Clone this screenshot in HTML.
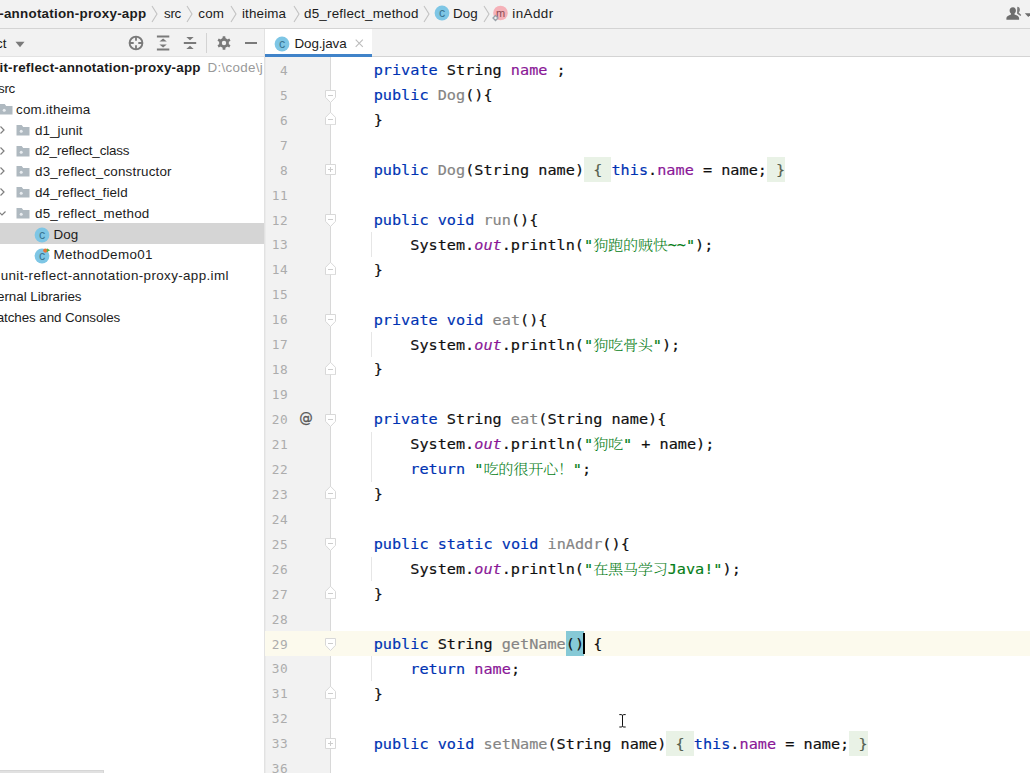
<!DOCTYPE html>
<html lang="zh"><head><meta charset="utf-8"><title>Dog.java</title>
<style>
*{box-sizing:border-box;margin:0;padding:0}
html,body{width:1030px;height:773px;overflow:hidden;background:#fff}
body{position:relative;font-family:"Liberation Sans","Noto Sans CJK SC",sans-serif;font-size:13px;color:#000}
#nav{position:absolute;left:0;top:0;width:1030px;height:29px;background:#f2f2f2;border-bottom:1px solid #d4d4d4;overflow:hidden}
.t{position:absolute;top:0;line-height:27px;white-space:nowrap;font-size:13.4px;color:#1c1c1c}
.b{font-weight:bold}
#nav svg,#head svg{position:absolute}
#side{position:absolute;left:0;top:29px;width:265px;height:744px;background:#fff;border-right:1px solid #e2e2e2;overflow:hidden}
#head{position:absolute;left:0;top:0;width:264px;height:28px;background:#f2f2f2;border-bottom:1px solid #e3e3e3;overflow:hidden}
#head .t{line-height:30px}
#tree{position:absolute;left:0;top:0;width:264px;height:773px;overflow:hidden}
.row{position:absolute;left:0;width:264px;height:21px;white-space:nowrap}
.row.sel{background:#d5d5d5}
.tx{position:absolute;top:0.200px;line-height:21px;font-size:13.4px;color:#1c1c1c;white-space:nowrap}
.tx.gray{color:#999}
.row .ic{position:absolute;top:2.500px}
#hscroll{position:absolute;left:0;top:770px;width:104px;height:3px;background:#e1e1e1;border-top:1px solid #d6d6d6;border-right:1px solid #d6d6d6}
#tabs{position:absolute;left:265px;top:29px;width:765px;height:28px;background:#f2f2f2;border-bottom:1px solid #d4d4d4}
#tab{position:absolute;left:0;top:0;width:107px;height:28px;background:#fff;border-bottom:3px solid #4083c9}
#tab .t{line-height:29px}
#tab svg{position:absolute}
#editor{position:absolute;left:265px;top:57px;width:765px;height:716px;background:#fff;overflow:hidden}
#gutter{position:absolute;left:0;top:0;width:66px;height:716px;background:#f2f2f2;border-right:1px solid #d8d8d8;border-left:1px solid #ebebeb}
.ln{position:absolute;left:265px;width:765px;height:24.94px}
.currow{position:absolute;left:265px;width:765px;height:24.94px;background:#fcfaed}
.num{position:absolute;right:741.5px;top:1.600px;line-height:24.94px;font-family:"DejaVu Sans Mono","Liberation Mono",monospace;font-size:12.800px;letter-spacing:0.700px;color:#acacac}
.code{position:absolute;left:72.12px;top:0.9px;line-height:24.94px;font-family:"DejaVu Sans Mono","Liberation Mono","Noto Serif CJK SC",monospace;font-size:15.19px;color:#101010;white-space:pre;-webkit-text-stroke-width:0.180px;transform:scaleY(0.935);transform-origin:0 50%}
.cj{letter-spacing:-0.290px;font-weight:300;-webkit-text-stroke-width:0}
.k{color:#0033b3}.g{color:#858585}.f{color:#8a1797}.s{color:#067d17}.i{font-style:italic}
.fd{position:absolute;background:#e9f2e6;height:24.94px}
.br{position:absolute;background:#86c9d6;height:24.94px}
.fdt{color:#55604f}
.caret{position:absolute;width:2px;height:21px;background:#000}
.fold{position:absolute}
.at{position:absolute;left:299.300px;line-height:24.94px;font-size:13.500px;color:#585858;font-family:"DejaVu Sans","Liberation Sans",sans-serif;-webkit-text-stroke:0.300px #585858}
.guide{position:absolute;left:371px;width:1px;background:#e6e6e6}
</style></head><body>
<div id="nav">
<span class="t b" style="right:883.6px;letter-spacing:0.243px;">-annotation-proxy-app</span>
<svg style="left:150.5px;top:5px" width="7" height="18" viewBox="0 0 7 18"><path d="M1 1L6 9L1 17" fill="none" stroke="#c2c2c2" stroke-width="1.100"/></svg>
<span class="t" style="left:164.0px;letter-spacing:-0.286px;">src</span>
<svg style="left:185.5px;top:5px" width="7" height="18" viewBox="0 0 7 18"><path d="M1 1L6 9L1 17" fill="none" stroke="#c2c2c2" stroke-width="1.100"/></svg>
<span class="t" style="left:198.3px;letter-spacing:0.163px;">com</span>
<svg style="left:230.0px;top:5px" width="7" height="18" viewBox="0 0 7 18"><path d="M1 1L6 9L1 17" fill="none" stroke="#c2c2c2" stroke-width="1.100"/></svg>
<span class="t" style="left:242.0px;letter-spacing:0.147px;">itheima</span>
<svg style="left:292.5px;top:5px" width="7" height="18" viewBox="0 0 7 18"><path d="M1 1L6 9L1 17" fill="none" stroke="#c2c2c2" stroke-width="1.100"/></svg>
<span class="t" style="left:304.0px;letter-spacing:0.216px;">d5_reflect_method</span>
<svg style="left:423.0px;top:5px" width="7" height="18" viewBox="0 0 7 18"><path d="M1 1L6 9L1 17" fill="none" stroke="#c2c2c2" stroke-width="1.100"/></svg>
<svg class="nic" style="left:433.600px;top:5.300px" width="16" height="16" viewBox="0 0 16 16"><circle cx="8" cy="8" r="7.400" fill="#7ec6e5"/><text x="8" y="11.800" font-family="Liberation Sans, sans-serif" font-size="12.500" text-anchor="middle" fill="#3a7693">c</text></svg>
<span class="t" style="left:453.0px;letter-spacing:0.074px;">Dog</span>
<svg style="left:483.0px;top:5px" width="7" height="18" viewBox="0 0 7 18"><path d="M1 1L6 9L1 17" fill="none" stroke="#c2c2c2" stroke-width="1.100"/></svg>
<svg class="nic" style="left:491px;top:5.300px" width="17" height="17" viewBox="0 0 17 17"><circle cx="9.500" cy="8" r="7.300" fill="#f5b1b8"/><text x="9.500" y="11.900" font-family="Liberation Sans, sans-serif" font-size="11" text-anchor="middle" fill="#8a4b53">m</text><path d="M4.500 10.500L7 13L4.500 15.500L2 13Z" fill="#f2f2f2" stroke="#9aa1a8" stroke-width="1.300"/></svg>
<span class="t" style="left:512.3px;letter-spacing:0.430px;">inAddr</span>
<svg style="left:1005px;top:6px" width="25" height="16" viewBox="0 0 25 16"><path d="M12.3 0.8c1.6 0 2.6 1.3 2.6 2.9c0 1.2-.5 2.2-1.2 2.8l2.6 2.4l-.9 1l-3.4-2.5z" fill="#7b7b7b"/><path d="M8 1.3c1.8 0 2.9 1.4 2.9 3.1c0 1.3-.6 2.5-1.4 3.1v.9c2.500 .8 4.300 1.800 4.600 3.500v1.900h-12.700v-1.900c.3-1.700 2.100-2.700 4.600-3.500v-.9c-.8-.6-1.400-1.800-1.400-3.100c0-1.700 1.100-3.100 3.400-3.100z" fill="#6e6e6e"/><path d="M19.800 7.300h7l-3.500 3.600z" fill="#6e6e6e"/></svg>
</div>
<div id="side">
<div id="head">
<span class="t" style="right:257.5px;">ct</span>
<svg style="left:14.500px;top:11.800px" width="10" height="7" viewBox="0 0 10 7"><path d="M0.5 0.8H9.500L5 6.200Z" fill="#7a7a7a"/></svg>
<svg style="left:127.6px;top:5.800px" width="16" height="16" viewBox="0 0 16 16"><circle cx="8" cy="8" r="6.400" fill="none" stroke="#7a7a7a" stroke-width="1.900"/><path d="M8 1.500V5.700M8 10.300V14.500M1.500 8H5.700M10.300 8H14.500" stroke="#7a7a7a" stroke-width="1.800"/></svg>
<svg style="left:155px;top:5.800px" width="16" height="16" viewBox="0 0 16 16"><path d="M1.900 1.400H14.300M1.900 14.600H14.300" stroke="#7a7a7a" stroke-width="2"/><path d="M8.100 3.500L11.800 6.500H4.400ZM8.100 12.500L11.800 9.500H4.400Z" fill="#7a7a7a"/></svg>
<svg style="left:181.500px;top:5.800px" width="16" height="16" viewBox="0 0 16 16"><path d="M1.800 8H14.200" stroke="#7a7a7a" stroke-width="2"/><path d="M8 5.300L11.700 2.100H4.300ZM8 10.700L11.700 14H4.300Z" fill="#7a7a7a"/></svg>
<div style="position:absolute;left:206px;top:4px;width:1px;height:20px;background:#d3d3d3"></div>
<svg style="left:216px;top:6.100px" width="16" height="16" viewBox="0 0 16 16"><g fill="#7a7a7a"><circle cx="8" cy="8" r="4.900"/><rect x="6.600" y="1.200" width="2.800" height="13.600" rx="0.500"/><rect x="6.600" y="1.200" width="2.800" height="13.600" rx="0.500" transform="rotate(60 8 8)"/><rect x="6.600" y="1.200" width="2.800" height="13.600" rx="0.500" transform="rotate(120 8 8)"/></g><circle cx="8" cy="8" r="2.200" fill="#f2f2f2"/></svg>
<div style="position:absolute;left:245px;top:13px;width:12px;height:2px;background:#7a7a7a"></div>
</div>
</div>
<div id="tree">
<div class="row" style="top:56.90px"><span class="tx b" style="right:63.3px;letter-spacing:0.203px;">it-reflect-annotation-proxy-app</span><span class="tx gray" style="left:207.5px;letter-spacing:0.295px;">D:\code\j</span></div>
<div class="row" style="top:77.71px"><span class="tx" style="right:249.0px;letter-spacing:-0.286px;">src</span></div>
<div class="row" style="top:98.52px"><svg class="ic" style="left:-2.5px" width="16" height="16" viewBox="0 0 16 16"><path d="M1.5 3H6.7L8.2 5H14.5V13.5H1.5Z" fill="#afb9c0"/><circle cx="6.200" cy="9.200" r="1.500" fill="#e9edf0"/></svg><span class="tx" style="left:16.0px;letter-spacing:0.201px;">com.itheima</span></div>
<div class="row" style="top:119.33px"><svg class="ic" style="left:-6.5px" width="16" height="16" viewBox="0 0 16 16"><path d="M6.500 4.500L10 8L6.500 11.500" fill="none" stroke="#7f7f7f" stroke-width="1.200"/></svg><svg class="ic" style="left:14.5px" width="16" height="16" viewBox="0 0 16 16"><path d="M1.5 3H6.7L8.2 5H14.5V13.5H1.5Z" fill="#afb9c0"/><circle cx="6.200" cy="9.200" r="1.500" fill="#e9edf0"/></svg><span class="tx" style="left:35.0px;letter-spacing:0.085px;">d1_junit</span></div>
<div class="row" style="top:140.14px"><svg class="ic" style="left:-6.5px" width="16" height="16" viewBox="0 0 16 16"><path d="M6.500 4.500L10 8L6.500 11.500" fill="none" stroke="#7f7f7f" stroke-width="1.200"/></svg><svg class="ic" style="left:14.5px" width="16" height="16" viewBox="0 0 16 16"><path d="M1.5 3H6.7L8.2 5H14.5V13.5H1.5Z" fill="#afb9c0"/><circle cx="6.200" cy="9.200" r="1.500" fill="#e9edf0"/></svg><span class="tx" style="left:35.0px;letter-spacing:-0.148px;">d2_reflect_class</span></div>
<div class="row" style="top:160.95px"><svg class="ic" style="left:-6.5px" width="16" height="16" viewBox="0 0 16 16"><path d="M6.500 4.500L10 8L6.500 11.500" fill="none" stroke="#7f7f7f" stroke-width="1.200"/></svg><svg class="ic" style="left:14.5px" width="16" height="16" viewBox="0 0 16 16"><path d="M1.5 3H6.7L8.2 5H14.5V13.5H1.5Z" fill="#afb9c0"/><circle cx="6.200" cy="9.200" r="1.500" fill="#e9edf0"/></svg><span class="tx" style="left:35.0px;letter-spacing:0.195px;">d3_reflect_constructor</span></div>
<div class="row" style="top:181.76px"><svg class="ic" style="left:-6.5px" width="16" height="16" viewBox="0 0 16 16"><path d="M6.500 4.500L10 8L6.500 11.500" fill="none" stroke="#7f7f7f" stroke-width="1.200"/></svg><svg class="ic" style="left:14.5px" width="16" height="16" viewBox="0 0 16 16"><path d="M1.5 3H6.7L8.2 5H14.5V13.5H1.5Z" fill="#afb9c0"/><circle cx="6.200" cy="9.200" r="1.500" fill="#e9edf0"/></svg><span class="tx" style="left:35.0px;letter-spacing:0.123px;">d4_reflect_field</span></div>
<div class="row" style="top:202.57px"><svg class="ic" style="left:-6.5px" width="16" height="16" viewBox="0 0 16 16"><path d="M4.500 6.500L8 10L11.500 6.500" fill="none" stroke="#7f7f7f" stroke-width="1.200"/></svg><svg class="ic" style="left:14.5px" width="16" height="16" viewBox="0 0 16 16"><path d="M1.5 3H6.7L8.2 5H14.5V13.5H1.5Z" fill="#afb9c0"/><circle cx="6.200" cy="9.200" r="1.500" fill="#e9edf0"/></svg><span class="tx" style="left:35.0px;letter-spacing:0.210px;">d5_reflect_method</span></div>
<div class="row sel" style="top:223.38px"><svg class="ic" style="left:34.3px;top:3.400px" width="16" height="16" viewBox="0 0 16 16"><circle cx="8" cy="8" r="7.400" fill="#7ec6e5"/><text x="8" y="11.800" font-family="Liberation Sans, sans-serif" font-size="12.500" text-anchor="middle" fill="#3a7693">c</text></svg><span class="tx" style="left:53.5px;letter-spacing:0.007px;">Dog</span></div>
<div class="row" style="top:244.19px"><svg class="ic" style="left:34.3px;top:3.400px" width="16" height="16" viewBox="0 0 16 16"><circle cx="8" cy="8" r="7.400" fill="#7ec6e5"/><text x="8" y="11.800" font-family="Liberation Sans, sans-serif" font-size="12.500" text-anchor="middle" fill="#3a7693">c</text><circle cx="11.3" cy="2.6" r="2.1" fill="#e8743a"/><path d="M12.9 0.3L16 2.3L12.9 4.300Z" fill="#52ad3d"/></svg><span class="tx" style="left:53.5px;letter-spacing:0.327px;">MethodDemo01</span></div>
<div class="row" style="top:265.00px"><span class="tx" style="right:35.2px;letter-spacing:0.373px;">junit-reflect-annotation-proxy-app.iml</span></div>
<div class="row" style="top:285.81px"><span class="tx" style="right:182.5px;letter-spacing:-0.024px;">ernal Libraries</span></div>
<div class="row" style="top:306.62px"><span class="tx" style="right:143.8px;letter-spacing:-0.082px;">atches and Consoles</span></div>
</div>
<div id="hscroll"></div>
<div id="tabs"><div id="tab"><svg class="nic" style="left:8.700px;top:6.900px" width="16" height="16" viewBox="0 0 16 16"><circle cx="8" cy="8" r="7.400" fill="#7ec6e5"/><text x="8" y="11.800" font-family="Liberation Sans, sans-serif" font-size="12.500" text-anchor="middle" fill="#3a7693">c</text></svg><span class="t" style="left:29.5px;letter-spacing:-0.107px;">Dog.java</span><svg style="left:89.700px;top:9.800px" width="9" height="9" viewBox="0 0 9 9"><path d="M0.700 0.700L7.800 7.800M7.800 0.700L0.700 7.800" stroke="#bcbcbc" stroke-width="1.100"/></svg></div></div>
<div id="editor"><div id="gutter"></div></div>
<div class="guide" style="top:232.3px;height:24.9px"></div>
<div class="guide" style="top:332.0px;height:24.9px"></div>
<div class="guide" style="top:431.8px;height:49.9px"></div>
<div class="guide" style="top:556.5px;height:24.9px"></div>
<div class="guide" style="top:656.3px;height:24.9px"></div>
<div class="currow" style="top:630.92px"></div>
<div class="fd" style="left:584.03px;top:157.06px;width:27.43px"></div>
<div class="fd" style="left:766.93px;top:157.06px;width:18.29px"></div>
<div class="fd" style="left:666.34px;top:730.68px;width:27.43px"></div>
<div class="fd" style="left:849.24px;top:730.68px;width:18.29px"></div>
<div class="br" style="left:565.75px;top:630.92px;width:18.29px"></div>
<div class="ln" style="top:57.30px"><span class="num">4</span><pre class="code">    <span class="k">private</span> String <span class="f">name</span> ;</pre></div>
<div class="ln" style="top:82.24px"><span class="num">5</span><pre class="code">    <span class="k">public</span> <span class="g">Dog</span>(){</pre></div>
<svg class="fold" style="left:325.0px;top:90.0px" width="11" height="13" viewBox="0 0 11 13"><path d="M0.500 0.500H10.500V7.300L5.500 12.500L0.500 7.300Z" fill="#fff" stroke="#d8d8d8"/><path d="M3 5.500H8" stroke="#cdcdcd"/></svg>
<div class="ln" style="top:107.18px"><span class="num">6</span><pre class="code">    }</pre></div>
<svg class="fold" style="left:325.0px;top:112.0px" width="11" height="13" viewBox="0 0 11 13"><path d="M0.500 12.700H10.500V5.400L5.500 0.300L0.500 5.400Z" fill="#fff" stroke="#d8d8d8"/><path d="M3 7.500H8" stroke="#cdcdcd"/></svg>
<div class="ln" style="top:132.12px"><span class="num">7</span><pre class="code"></pre></div>
<div class="ln" style="top:157.06px"><span class="num">8</span><pre class="code">    <span class="k">public</span> <span class="g">Dog</span>(String name)<span class="fdt"> { </span><span class="k">this</span>.<span class="f">name</span> = name;<span class="fdt"> }</span></pre></div>
<svg class="fold" style="left:325.0px;top:164.0px" width="11" height="11" viewBox="0 0 11 11"><path d="M0.5 0.5H10.5V10.5H0.5Z" fill="#fff" stroke="#d8d8d8"/><path d="M3 5.500H8M5.500 3V8" stroke="#cdcdcd"/></svg>
<div class="ln" style="top:182.00px"><span class="num">11</span><pre class="code"></pre></div>
<div class="ln" style="top:206.94px"><span class="num">12</span><pre class="code">    <span class="k">public</span> <span class="k">void</span> <span class="g">run</span>(){</pre></div>
<svg class="fold" style="left:325.0px;top:214.0px" width="11" height="13" viewBox="0 0 11 13"><path d="M0.500 0.500H10.500V7.300L5.500 12.500L0.500 7.300Z" fill="#fff" stroke="#d8d8d8"/><path d="M3 5.500H8" stroke="#cdcdcd"/></svg>
<div class="ln" style="top:231.88px"><span class="num">13</span><pre class="code">        System.<span class="f i">out</span>.println(<span class="s">"<span class="cj">狗跑的贼快</span>~~"</span>);</pre></div>
<div class="ln" style="top:256.82px"><span class="num">14</span><pre class="code">    }</pre></div>
<svg class="fold" style="left:325.0px;top:262.0px" width="11" height="13" viewBox="0 0 11 13"><path d="M0.500 12.700H10.500V5.400L5.500 0.300L0.500 5.400Z" fill="#fff" stroke="#d8d8d8"/><path d="M3 7.500H8" stroke="#cdcdcd"/></svg>
<div class="ln" style="top:281.76px"><span class="num">15</span><pre class="code"></pre></div>
<div class="ln" style="top:306.70px"><span class="num">16</span><pre class="code">    <span class="k">private</span> <span class="k">void</span> <span class="g">eat</span>(){</pre></div>
<svg class="fold" style="left:325.0px;top:314.0px" width="11" height="13" viewBox="0 0 11 13"><path d="M0.500 0.500H10.500V7.300L5.500 12.500L0.500 7.300Z" fill="#fff" stroke="#d8d8d8"/><path d="M3 5.500H8" stroke="#cdcdcd"/></svg>
<div class="ln" style="top:331.64px"><span class="num">17</span><pre class="code">        System.<span class="f i">out</span>.println(<span class="s">"<span class="cj">狗吃骨头</span>"</span>);</pre></div>
<div class="ln" style="top:356.58px"><span class="num">18</span><pre class="code">    }</pre></div>
<svg class="fold" style="left:325.0px;top:362.0px" width="11" height="13" viewBox="0 0 11 13"><path d="M0.500 12.700H10.500V5.400L5.500 0.300L0.500 5.400Z" fill="#fff" stroke="#d8d8d8"/><path d="M3 7.500H8" stroke="#cdcdcd"/></svg>
<div class="ln" style="top:381.52px"><span class="num">19</span><pre class="code"></pre></div>
<div class="ln" style="top:406.46px"><span class="num">20</span><pre class="code">    <span class="k">private</span> String <span class="g">eat</span>(String name){</pre></div>
<svg class="fold" style="left:325.0px;top:414.0px" width="11" height="13" viewBox="0 0 11 13"><path d="M0.500 0.500H10.500V7.300L5.500 12.500L0.500 7.300Z" fill="#fff" stroke="#d8d8d8"/><path d="M3 5.500H8" stroke="#cdcdcd"/></svg>
<span class="at" style="top:406.46px">@</span>
<div class="ln" style="top:431.40px"><span class="num">21</span><pre class="code">        System.<span class="f i">out</span>.println(<span class="s">"<span class="cj">狗吃</span>"</span> + name);</pre></div>
<div class="ln" style="top:456.34px"><span class="num">22</span><pre class="code">        <span class="k">return</span> <span class="s">"<span class="cj">吃的很开心！</span>"</span>;</pre></div>
<div class="ln" style="top:481.28px"><span class="num">23</span><pre class="code">    }</pre></div>
<svg class="fold" style="left:325.0px;top:486.0px" width="11" height="13" viewBox="0 0 11 13"><path d="M0.500 12.700H10.500V5.400L5.500 0.300L0.500 5.400Z" fill="#fff" stroke="#d8d8d8"/><path d="M3 7.500H8" stroke="#cdcdcd"/></svg>
<div class="ln" style="top:506.22px"><span class="num">24</span><pre class="code"></pre></div>
<div class="ln" style="top:531.16px"><span class="num">25</span><pre class="code">    <span class="k">public</span> <span class="k">static</span> <span class="k">void</span> <span class="g">inAddr</span>(){</pre></div>
<svg class="fold" style="left:325.0px;top:538.0px" width="11" height="13" viewBox="0 0 11 13"><path d="M0.500 0.500H10.500V7.300L5.500 12.500L0.500 7.300Z" fill="#fff" stroke="#d8d8d8"/><path d="M3 5.500H8" stroke="#cdcdcd"/></svg>
<div class="ln" style="top:556.10px"><span class="num">26</span><pre class="code">        System.<span class="f i">out</span>.println(<span class="s">"<span class="cj">在黑马学习</span>Java!"</span>);</pre></div>
<div class="ln" style="top:581.04px"><span class="num">27</span><pre class="code">    }</pre></div>
<svg class="fold" style="left:325.0px;top:586.0px" width="11" height="13" viewBox="0 0 11 13"><path d="M0.500 12.700H10.500V5.400L5.500 0.300L0.500 5.400Z" fill="#fff" stroke="#d8d8d8"/><path d="M3 7.500H8" stroke="#cdcdcd"/></svg>
<div class="ln" style="top:605.98px"><span class="num">28</span><pre class="code"></pre></div>
<div class="ln cur" style="top:630.92px"><span class="num">29</span><pre class="code">    <span class="k">public</span> String <span class="g">getName</span>() {</pre></div>
<svg class="fold" style="left:325.0px;top:638.0px" width="11" height="13" viewBox="0 0 11 13"><path d="M0.500 0.500H10.500V7.300L5.500 12.500L0.500 7.300Z" fill="#fff" stroke="#d8d8d8"/><path d="M3 5.500H8" stroke="#cdcdcd"/></svg>
<div class="ln" style="top:655.86px"><span class="num">30</span><pre class="code">        <span class="k">return</span> <span class="f">name</span>;</pre></div>
<div class="ln" style="top:680.80px"><span class="num">31</span><pre class="code">    }</pre></div>
<svg class="fold" style="left:325.0px;top:686.0px" width="11" height="13" viewBox="0 0 11 13"><path d="M0.500 12.700H10.500V5.400L5.500 0.300L0.500 5.400Z" fill="#fff" stroke="#d8d8d8"/><path d="M3 7.500H8" stroke="#cdcdcd"/></svg>
<div class="ln" style="top:705.74px"><span class="num">32</span><pre class="code"></pre></div>
<div class="ln" style="top:730.68px"><span class="num">33</span><pre class="code">    <span class="k">public</span> <span class="k">void</span> <span class="g">setName</span>(String name)<span class="fdt"> { </span><span class="k">this</span>.<span class="f">name</span> = name;<span class="fdt"> }</span></pre></div>
<svg class="fold" style="left:325.0px;top:738.0px" width="11" height="11" viewBox="0 0 11 11"><path d="M0.5 0.5H10.5V10.5H0.5Z" fill="#fff" stroke="#d8d8d8"/><path d="M3 5.500H8M5.500 3V8" stroke="#cdcdcd"/></svg>
<div class="ln" style="top:755.62px"><span class="num">36</span><pre class="code"></pre></div>
<div class="caret" style="left:583.03px;top:633.12px"></div><svg style="position:absolute;left:619px;top:713.500px" width="7" height="15" viewBox="0 0 7 15"><path d="M0.300 0.600H2.300Q3.500 0.600 3.500 1.800V11.800Q3.500 13 2.300 13H0.300M6.700 0.600H4.700Q3.500 0.600 3.500 1.800M3.500 11.800Q3.500 13 4.700 13H6.700" fill="none" stroke="#111" stroke-width="1"/></svg>
</body></html>
